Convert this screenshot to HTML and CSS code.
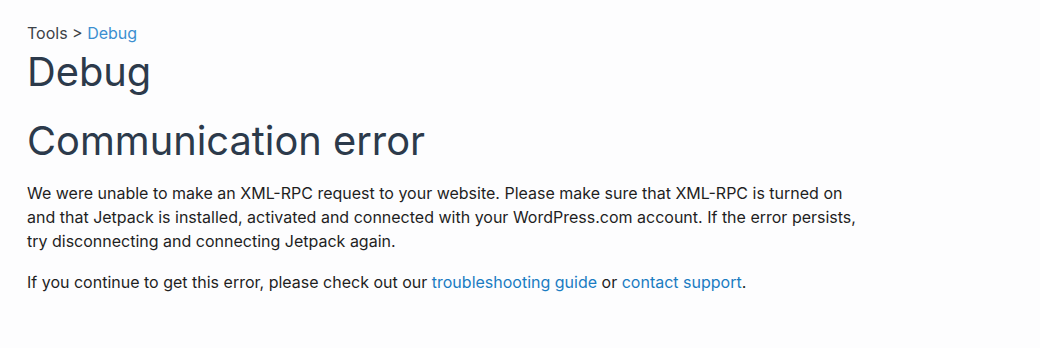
FILE: index.html
```html
<!DOCTYPE html>
<html lang="en">
<head>
    <meta charset="UTF-8">
    <meta name="viewport" content="width=device-width, initial-scale=1.0">
    <title>Debug - Tools</title>
    <link rel="stylesheet" href="styles.css">
</head>
<body>
    <div class="container">
        <nav class="breadcrumb">
            <span>Tools</span> &gt; <a href="#" class="crumb-link">Debug</a>
        </nav>

        <h1>Debug</h1>

        <section class="error-box">
            <h2>Communication error</h2>
            <p>
                We were unable to make an XML-RPC request to your website. Please make sure that XML-RPC is turned on
                and that Jetpack is installed, activated and connected with your WordPress.com account. If the error persists,
                try disconnecting and connecting Jetpack again.
            </p>
            <p>
                If you continue to get this error, please check out our
                <a href="#">troubleshooting guide</a> or <a href="#">contact support</a>.
            </p>
        </section>
    </div>
</body>
</html>
```

FILE: styles.css
```css
:root {
    --page-bg: #fdfdfe;
    --heading: #2c3a4b;
    --text: #1f1f1f;
    --muted: #3c4248;
    --link: #1a7cc2;
    --crumb-link: #3b8fd0;
}

body {
    font-family: Inter, 'Noto Sans', sans-serif;
    background: var(--page-bg);
    margin: 0;
    padding: 0;
    color: var(--text);
}

.container {
    width: 832px;
    padding: 21px 27px;
}

.breadcrumb {
    font-size: 16px;
    line-height: 24px;
    color: var(--muted);
}

.crumb-link {
    color: var(--crumb-link);
    text-decoration: none;
}

h1,
h2 {
    font-weight: 400;
    font-size: 39.8px;
    line-height: 48px;
    color: var(--heading);
    margin: 0;
}

h1 {
    margin-top: 3px;
}

h2 {
    margin-top: 21px;
    margin-bottom: 16px;
}

p {
    font-size: 16px;
    line-height: 24px;
    margin: 0 0 17px;
}

p a {
    color: var(--link);
    text-decoration: none;
}
```
